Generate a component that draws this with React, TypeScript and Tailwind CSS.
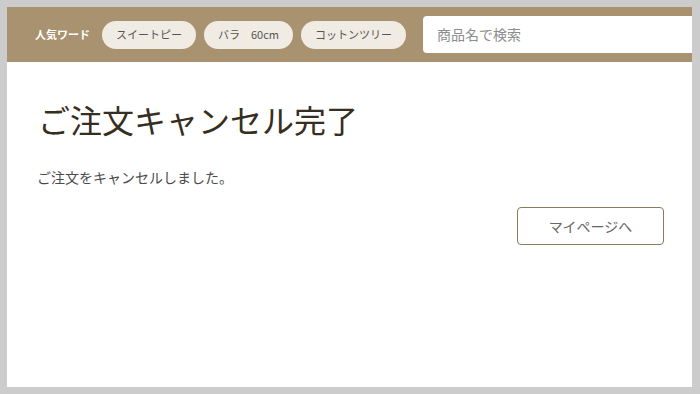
import React from 'react';

const words = ['スイートピー', 'バラ　60cm', 'コットンツリー'];

const App: React.FC = () => {
  return (
    <div
      className="w-[700px] h-[394px] bg-[#cccccc] pl-[7px] pt-[7px] pr-[8px] pb-[7px] overflow-hidden"
      style={{ fontFamily: '"Noto Sans CJK JP", "Noto Sans", sans-serif' }}
    >
      <div className="w-full h-full bg-white flex flex-col overflow-hidden">
        {/* Header */}
        <div className="h-[55px] bg-[#a99270] flex items-center pl-[28px] shrink-0">
          <span className="text-[11px] font-bold text-white mr-[12px] whitespace-nowrap">人気ワード</span>
          <div className="flex gap-[8px] shrink-0">
            {words.map((w) => (
              <span
                key={w}
                className="h-[28px] px-[14px] flex items-center rounded-full bg-[#f0ebe3] text-[11px] text-[#555] whitespace-pre"
              >
                {w}
              </span>
            ))}
          </div>
          <div className="ml-[17px] flex-1 h-[37px] bg-white rounded-l-[4px] flex items-center pl-[14px] min-w-[280px]">
            <span className="text-[14px] text-[#8c8c8c] whitespace-nowrap">商品名で検索</span>
          </div>
        </div>

        {/* Content */}
        <div className="pl-[29px] pr-[28px] pt-[33px] flex flex-col">
          <h1 className="text-[32px] leading-[48px] text-[#362e20] font-normal pl-[2px]">ご注文キャンセル完了</h1>
          <p className="mt-[22px] text-[14px] leading-[24px] text-[#4a4a4a] pl-[1px]">ご注文をキャンセルしました。</p>
          <div className="flex justify-end mt-[18px]">
            <button className="w-[147px] h-[38px] border border-[#8a7b5e] rounded-[4px] text-[14px] text-[#666] bg-white">
              マイページへ
            </button>
          </div>
        </div>
      </div>
    </div>
  );
};

export default App;
